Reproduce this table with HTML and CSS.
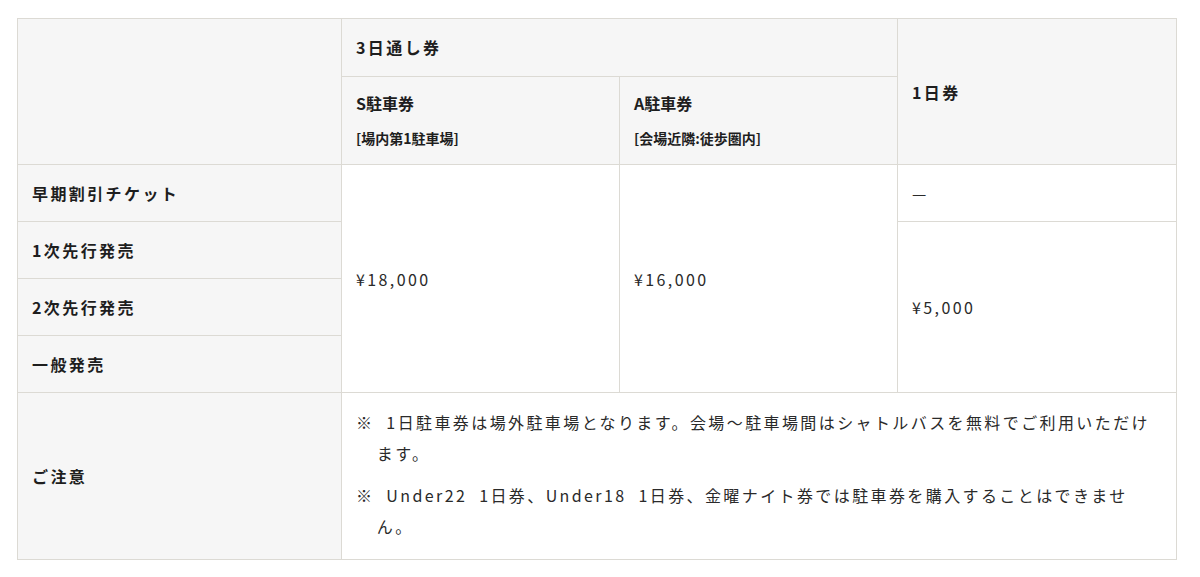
FILE: index.html
```html
<!DOCTYPE html>
<html lang="ja">
<head>
<meta charset="utf-8">
<link rel="stylesheet" href="styles.css">
</head>
<body>
<div class="wrap">
<table class="tbl">
  <colgroup>
    <col class="c1"><col class="c2"><col class="c3"><col class="c4">
  </colgroup>
  <thead>
    <tr>
      <th rowspan="2" class="hd"></th>
      <th colspan="2" class="hd top">3日通し券</th>
      <th rowspan="2" class="hd">1日券</th>
    </tr>
    <tr>
      <th class="hd"><p class="tname">S駐車券</p><p class="tsub">[場内第1駐車場]</p></th>
      <th class="hd"><p class="tname">A駐車券</p><p class="tsub">[会場近隣:徒歩圏内]</p></th>
    </tr>
  </thead>
  <tbody>
    <tr>
      <th class="rh">早期割引チケット</th>
      <td rowspan="4">¥18,000</td>
      <td rowspan="4">¥16,000</td>
      <td>—</td>
    </tr>
    <tr>
      <th class="rh">1次先行発売</th>
      <td rowspan="3">¥5,000</td>
    </tr>
    <tr>
      <th class="rh">2次先行発売</th>
    </tr>
    <tr>
      <th class="rh">一般発売</th>
    </tr>
    <tr>
      <th class="rh">ご注意</th>
      <td colspan="3" class="note">
        <p class="nt">※&nbsp;&nbsp;1日駐車券は場外駐車場となります。会場～駐車場間はシャトルバスを無料でご利用いただけます。</p>
        <p class="nt">※&nbsp;&nbsp;Under22&nbsp;&nbsp;1日券、Under18&nbsp;&nbsp;1日券、金曜ナイト券では駐車券を購入することはできません。</p>
      </td>
    </tr>
  </tbody>
</table>
</div>
</body>
</html>
```
FILE: styles.css
```css
html, body {
  margin: 0;
  padding: 0;
  background: #ffffff;
}
body {
  font-family: "Noto Sans CJK JP", "Noto Sans", sans-serif;
  color: #222222;
}
.wrap {
  padding: 18px 0 0 17px;
}
.tbl {
  border-collapse: collapse;
  table-layout: fixed;
  width: 1159px;
}
.c1 { width: 324px; }
.c2 { width: 278px; }
.c3 { width: 278px; }
.c4 { width: 279px; }
.tbl th,
.tbl td {
  border: 1px solid #dcdad4;
  padding: 14px 14px;
  text-align: left;
  vertical-align: middle;
  font-size: 16px;
  line-height: 28px;
  letter-spacing: 0.15em;
}
.tbl th {
  background: #f6f6f6;
  font-weight: 700;
  color: #1e1e1e;
}
.tbl th.top {
  padding-bottom: 15px;
}
.tbl td {
  background: #ffffff;
  font-weight: 400;
  color: #2a2a2a;
}
.tname {
  margin: 0;
  line-height: 24px;
  letter-spacing: 0;
}
.tsub {
  margin: 11px 0 0;
  font-size: 14px;
  line-height: 24px;
  letter-spacing: 0;
}
.tbl td.note {
  padding: 14px 14px 17px;
}
.nt {
  margin: 0;
  line-height: 31px;
  padding-left: 1.3em;
  text-indent: -1.3em;
}
.nt + .nt {
  margin-top: 11px;
}
```
